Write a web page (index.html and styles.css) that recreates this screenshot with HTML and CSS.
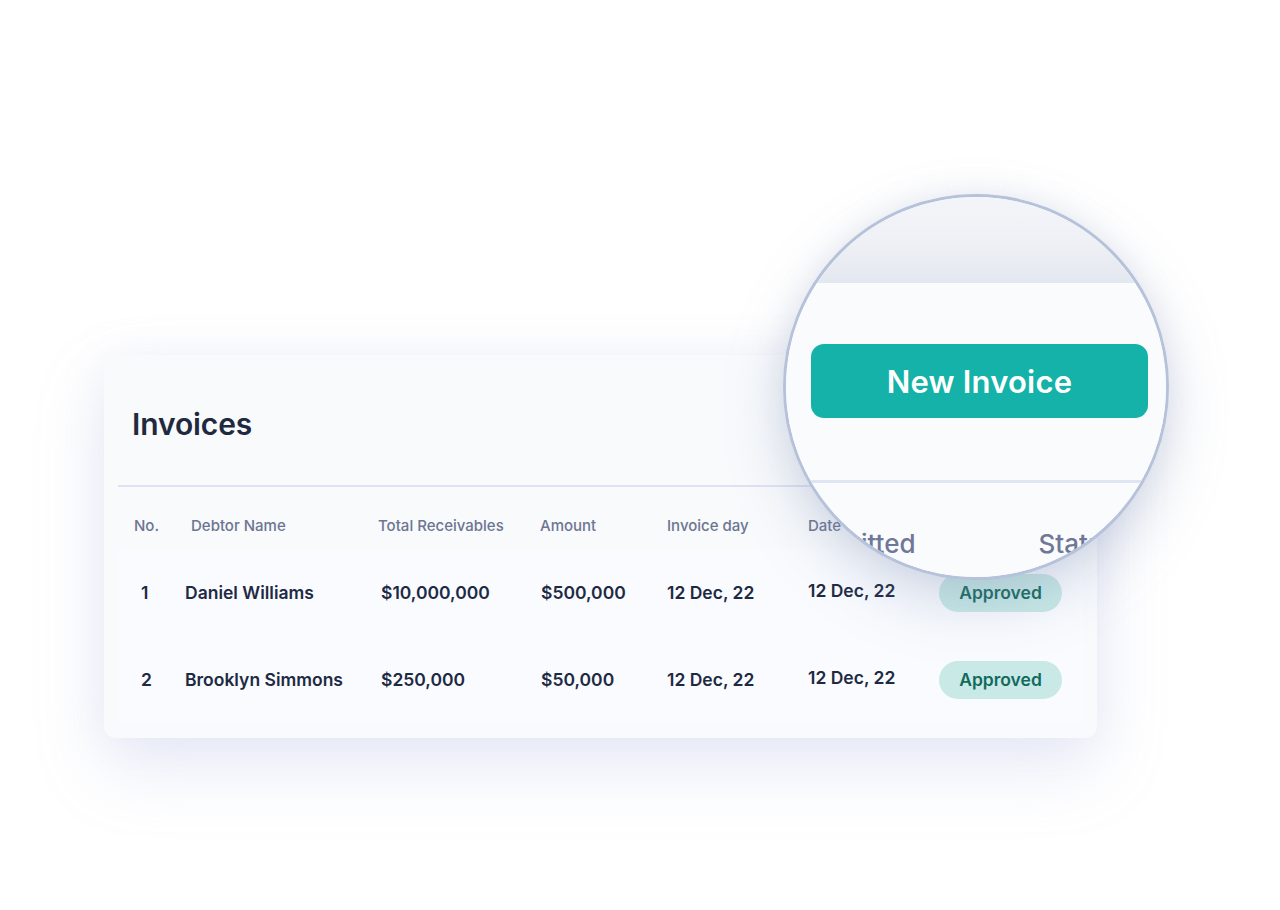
FILE: index.html
```html
<!DOCTYPE html>
<html lang="en">
<head>
<meta charset="utf-8">
<title>Invoices</title>
<link rel="stylesheet" href="styles.css">
</head>
<body>
<div class="stage">
  <section class="card">
    <h1 class="title">Invoices</h1>
    <div class="rule"></div>
    <div class="table">
      <div class="row head">
        <div class="cell h-no">No.</div>
        <div class="cell h-name">Debtor Name</div>
        <div class="cell h-total">Total Receivables</div>
        <div class="cell h-amount">Amount</div>
        <div class="cell">Invoice day</div>
        <div class="cell">Date Submitted</div>
        <div class="cell">Status</div>
      </div>
      <div class="row body">
        <div class="cell">1</div>
        <div class="cell">Daniel Williams</div>
        <div class="cell">$10,000,000</div>
        <div class="cell">$500,000</div>
        <div class="cell">12 Dec, 22</div>
        <div class="cell raised">12 Dec, 22</div>
        <div class="cell"><span class="badge">Approved</span></div>
      </div>
      <div class="row body">
        <div class="cell">2</div>
        <div class="cell">Brooklyn Simmons</div>
        <div class="cell">$250,000</div>
        <div class="cell">$50,000</div>
        <div class="cell">12 Dec, 22</div>
        <div class="cell raised">12 Dec, 22</div>
        <div class="cell"><span class="badge">Approved</span></div>
      </div>
    </div>
  </section>

  <div class="lens">
    <div class="lens-top"></div>
    <div class="lens-panel">
      <button class="btn">New Invoice</button>
      <div class="lens-rule"></div>
      <div class="lens-head">
        <span class="lh-date">Date Submitted</span>
        <span class="lh-status">Status</span>
      </div>
    </div>
  </div>
</div>
</body>
</html>
```

FILE: styles.css
```css
* { box-sizing: border-box; }
html, body {
  margin: 0;
  padding: 0;
  background: #ffffff;
  font-family: "Inter", "Liberation Sans", sans-serif;
}
.stage {
  position: relative;
  width: 1280px;
  height: 910px;
  padding: 355px 0 0 104px;
  overflow: hidden;
}
.card {
  width: 993px;
  height: 383px;
  background: #f8fafc;
  border-radius: 12px;
  box-shadow: 0 30px 70px rgba(150, 165, 220, 0.22), 0 0 40px rgba(190, 200, 225, 0.16);
  padding: 0 14px;
  display: flex;
  flex-direction: column;
}
.title {
  margin: 51px 0 0 14px;
  font-size: 30px;
  line-height: 36px;
  font-weight: 600;
  color: #1f2a40;
  letter-spacing: -0.1px;
}
.rule {
  margin-top: 43px;
  height: 2px;
  background: #dde3f3;
}
.table {
  display: flex;
  flex-direction: column;
  margin-top: 16px;
}
.row {
  display: grid;
  grid-template-columns: 44px 196px 160px 126px 141px 131px 1fr;
  padding-left: 23px;
  align-items: center;
}
.row.head {
  height: 46px;
  font-size: 15px;
  font-weight: 500;
  color: #6c7592;
  padding-bottom: 2px;
}
.row.body {
  height: 87px;
  font-size: 17.5px;
  font-weight: 600;
  color: #1e2a44;
  background: #f9fbfe;
}
.h-no { margin-left: -7px; }
.h-name { margin-left: 6px; }
.h-total { margin-left: -3px; }
.h-amount { margin-left: -1px; }
.raised { margin-bottom: 4px; }
.badge {
  display: inline-flex;
  align-items: center;
  justify-content: center;
  width: 123px;
  height: 38px;
  border-radius: 19px;
  background: #c8e9e6;
  color: #12695e;
  font-size: 17.5px;
  font-weight: 600;
}

/* magnifier */
.lens {
  position: absolute;
  left: 783px;
  top: 194px;
  width: 386px;
  height: 386px;
  border-radius: 50%;
  border: 3px solid #b6c1da;
  overflow: hidden;
  background: #f9fbfd;
  box-shadow: 0 24px 60px rgba(120, 135, 175, 0.28), 0 0 30px rgba(150, 160, 190, 0.16);
  display: flex;
  flex-direction: column;
}
.lens-top {
  height: 86px;
  flex: none;
  background: linear-gradient(to bottom, #f4f5f9 0%, #eef0f5 55%, #e3e7ef 100%);
}
.lens-panel {
  flex: 1;
  background: #f9fbfd;
  display: flex;
  flex-direction: column;
  padding-top: 61px;
}
.btn {
  margin-left: 25px;
  width: 337px;
  height: 74px;
  border: 0;
  border-radius: 13px;
  background: #14b2a8;
  color: #ffffff;
  font-family: "Inter", "Liberation Sans", sans-serif;
  font-size: 31px;
  font-weight: 600;
  letter-spacing: 0.2px;
  padding: 0;
}
.lens-rule {
  margin-top: 62px;
  height: 3px;
  background: #dfe5f2;
}
.lens-head {
  margin-top: 45px;
  display: flex;
  white-space: nowrap;
  margin-left: -61px;
  font-size: 26px;
  font-weight: 500;
  color: #6f7798;
  line-height: 32px;
}
.lh-status { margin-left: 123px; }
```
